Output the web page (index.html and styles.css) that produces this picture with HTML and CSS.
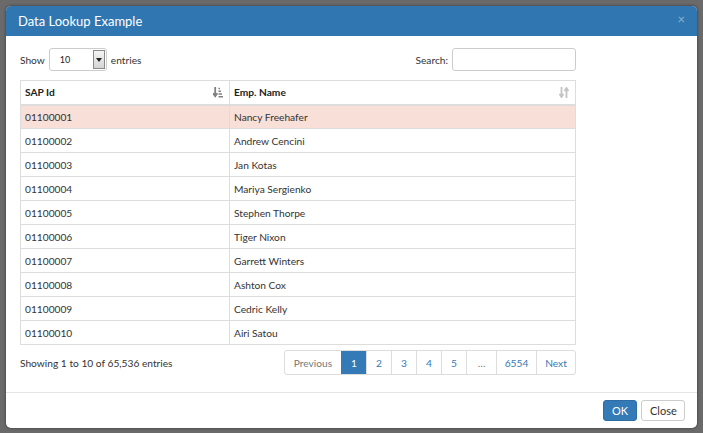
FILE: index.html
```html
<!DOCTYPE html>
<html>
<head>
<meta charset="utf-8">
<link rel="stylesheet" href="styles.css">
</head>
<body>
<div class="modal">
  <div class="modal-header">
    <span class="title">Data Lookup Example</span>
    <span class="close-x">×</span>
  </div>
  <div class="modal-body">
    <div class="wrapper">
      <div class="controls">
        <label class="length">Show
          <span class="select"><span class="select-val">10</span><span class="select-btn"><svg width="6" height="4" viewBox="0 0 6 4"><path d="M0 0h6L3 4z" fill="#222"/></svg></span></span>
          entries</label>
        <label class="search">Search: <span class="input"></span></label>
      </div>
      <table class="grid">
        <thead>
          <tr>
            <th class="c1"><div class="th-in">SAP Id
              <svg class="sort-icon" width="10" height="11" viewBox="0 0 10 11"><path d="M2.2 0v8.5M0 6.3l2.2 3 2.2-3" stroke="#808080" stroke-width="1.8" fill="none"/><path d="M5.5 1.5h1.5M5.5 4.3h2.5M5.5 7h3.5M5.5 9.8h4.5" stroke="#808080" stroke-width="1.4"/></svg></div></th>
            <th class="c2"><div class="th-in">Emp. Name
              <svg class="sort-icon" width="10" height="11" viewBox="0 0 10 11"><path d="M2.5 0v10M0.5 7l2 3 2-3" stroke="#c4c4c4" stroke-width="1.8" fill="none"/><path d="M7.5 11V1M5.5 4l2-3 2 3" stroke="#c4c4c4" stroke-width="1.8" fill="none"/></svg></div></th>
          </tr>
        </thead>
        <tbody>
          <tr class="sel"><td>01100001</td><td>Nancy Freehafer</td></tr>
          <tr><td>01100002</td><td>Andrew Cencini</td></tr>
          <tr><td>01100003</td><td>Jan Kotas</td></tr>
          <tr><td>01100004</td><td>Mariya Sergienko</td></tr>
          <tr><td>01100005</td><td>Stephen Thorpe</td></tr>
          <tr><td>01100006</td><td>Tiger Nixon</td></tr>
          <tr><td>01100007</td><td>Garrett Winters</td></tr>
          <tr><td>01100008</td><td>Ashton Cox</td></tr>
          <tr><td>01100009</td><td>Cedric Kelly</td></tr>
          <tr><td>01100010</td><td>Airi Satou</td></tr>
        </tbody>
      </table>
      <div class="bottom">
        <div class="info">Showing 1 to 10 of 65,536 entries</div>
        <ul class="pagination">
          <li class="disabled w-prev">Previous</li>
          <li class="active w-num">1</li>
          <li class="w-num">2</li>
          <li class="w-num">3</li>
          <li class="w-num">4</li>
          <li class="w-num">5</li>
          <li class="disabled w-ell">…</li>
          <li class="w-big">6554</li>
          <li class="w-next">Next</li>
        </ul>
      </div>
    </div>
  </div>
  <div class="modal-footer">
    <button class="btn btn-primary">OK</button>
    <button class="btn btn-default">Close</button>
  </div>
</div>
</body>
</html>
```
FILE: styles.css
```css
* { box-sizing: border-box; }
html, body { margin: 0; height: 100%; }
body {
  background: #6a6a6a;
  padding: 6px 6px 5px 6px;
  font-family: Lato, "Liberation Sans", sans-serif;
  font-size: 10.2px;
  color: #333;
}
.modal {
  background: #fff;
  border-radius: 5px;
  overflow: hidden;
  height: 422px;
  display: flex;
  flex-direction: column;
  box-shadow: 0 0 3px rgba(0,0,0,0.5);
}
.modal-header {
  background: #3077b2;
  height: 30px;
  display: flex;
  align-items: center;
  justify-content: space-between;
  padding: 0 12px 0 12px;
}
.title { color: #fff; font-size: 13px; }
.close-x { color: #8fb0cf; font-size: 13px; margin-top: -4px; }
.modal-body {
  padding: 12px 14px 0 14px;
  flex: 1;
  border-bottom: 1px solid #e5e5e5;
}
.wrapper { width: 556px; }
.controls {
  display: flex;
  justify-content: space-between;
  align-items: center;
  height: 23px;
}
.length, .search { display: flex; align-items: center; gap: 4px; }
.select {
  display: flex;
  width: 58px;
  height: 23px;
  border: 1px solid #ccc;
  border-radius: 3px;
  padding: 1px;
  align-items: stretch;
}
.select-val { flex: 1; padding-left: 9px; display: flex; align-items: center; font-size: 9px; color: #222; }
.select-btn {
  width: 12px;
  border: 1px solid #888;
  background: linear-gradient(#f4f4f4, #d4d4d4);
  display: flex;
  align-items: center;
  justify-content: center;
}
.input {
  display: block;
  width: 124px;
  height: 23px;
  border: 1px solid #ccc;
  border-radius: 3px;
}
.grid {
  margin-top: 9px;
  width: 556px;
  border-collapse: collapse;
  border: 1px solid #ddd;
}
.grid th, .grid td {
  border: 1px solid #ddd;
  padding: 0 4px;
  text-align: left;
  height: 24px;
}
.grid th { font-weight: bold; border-bottom: 2px solid #ddd; color: #222; }
.grid .c1 { width: 209px; }
.th-in { display: flex; justify-content: space-between; align-items: center; }
.sort-icon { margin-right: 2px; }
.grid tr.sel td { background: #f8dfd7; }
.bottom {
  display: flex;
  justify-content: space-between;
  align-items: center;
  margin-top: 5px;
}
.pagination {
  list-style: none;
  margin: 0;
  padding: 0;
  display: flex;
  border: 1px solid #ddd;
  border-radius: 3px;
  overflow: hidden;
}
.pagination li {
  height: 23px;
  display: flex;
  align-items: center;
  justify-content: center;
  color: #337ab7;
  border-left: 1px solid #ddd;
}
.pagination li:first-child { border-left: 0; }
.pagination li.disabled { color: #777; }
.pagination li.active { background: #337ab7; color: #fff; border-color: #337ab7; }
.w-prev { width: 56px; }
.w-num { width: 25px; }
.w-ell { width: 30px; }
.w-big { width: 40px; }
.w-next { width: 39px; }
.modal-footer {
  height: 35px;
  display: flex;
  justify-content: flex-end;
  align-items: center;
  gap: 4px;
  padding-right: 12px;
}
.btn {
  font-family: inherit;
  font-size: 11px;
  height: 21px;
  border-radius: 3px;
  padding: 0 8px;
  border: 1px solid #ccc;
  background: #fff;
  color: #333;
}
.btn-primary { background: #337ab7; border-color: #2e6da4; color: #fff; width: 34px; }
.btn-default { width: 44px; }
```
